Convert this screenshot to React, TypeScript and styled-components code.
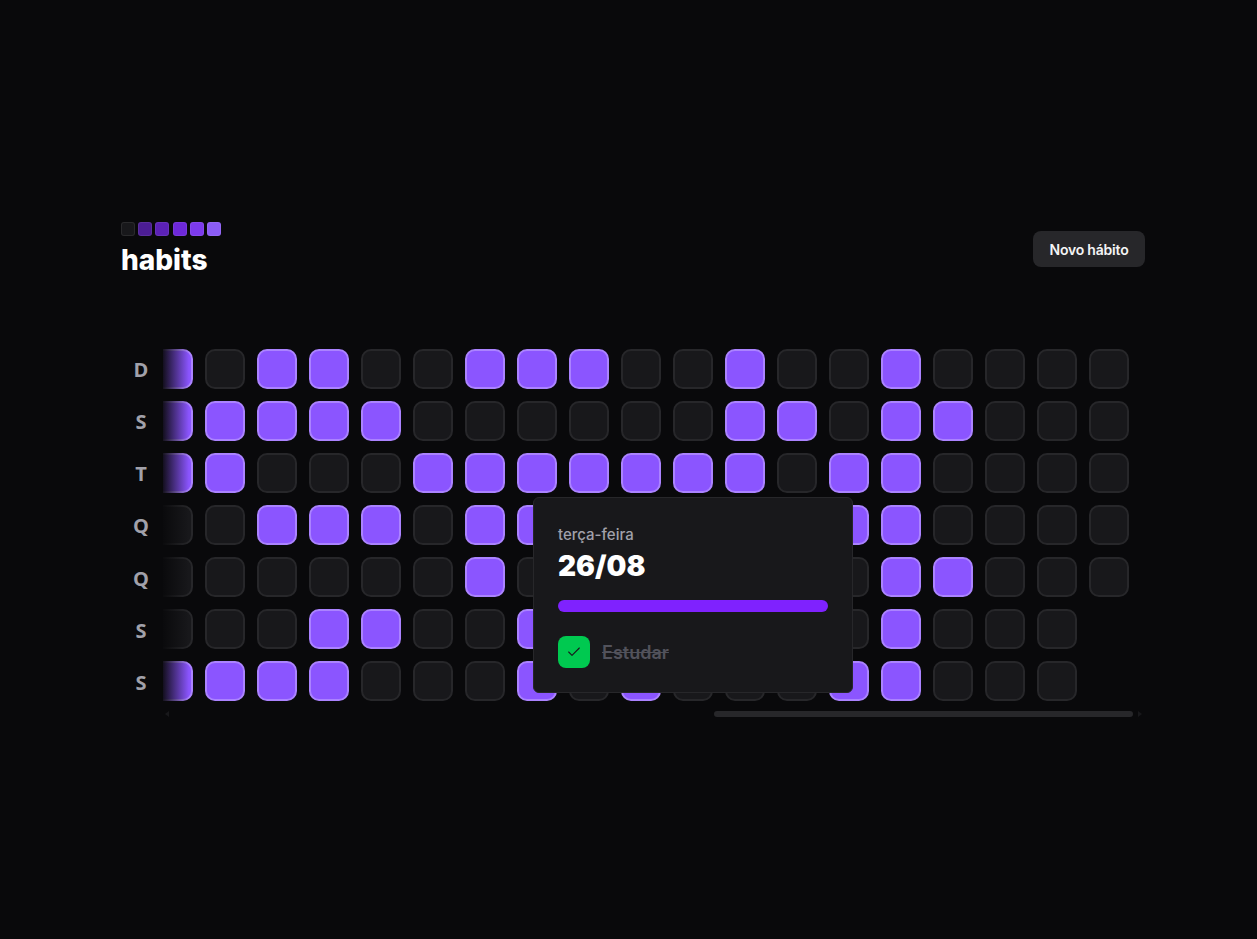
import React from 'react';
import styled, {createGlobalStyle} from "styled-components";
import {Check} from "lucide-react";

const GlobalStyle = createGlobalStyle`
  * {
    box-sizing: border-box;
    margin: 0;
    padding: 0;
  }

  body {
    background-color: #09090b;
    color: #ffffff;
    font-family: Inter, "Liberation Sans", sans-serif;
  }
`

const weekDays = ['D', 'S', 'T', 'Q', 'Q', 'S', 'S']
const logoColors = ['#18181b', '#4c1d95', '#5b21b6', '#6d28d9', '#7c3aed', '#8b5cf6']

// one string per week day, one char per week. "-" is a day still to come
const history = [
    '1011001110010010000',
    '1111100000011011000',
    '1100011111110110000',
    '0011101100000110000',
    '0000001000000011000',
    '000110010000001000-',
    '111100010100011000-',
]

export default function App() {
    return (
        <Page>
            <GlobalStyle/>
            <Container>
                <Header>
                    <div>
                        <Logo>
                            {logoColors.map(color => <LogoSquare key={color} $color={color}/>)}
                        </Logo>
                        <Title>habits</Title>
                    </div>
                    <NewHabitButton>Novo hábito</NewHabitButton>
                </Header>

                <Board>
                    <WeekDays>
                        {weekDays.map((day, index) => <WeekDay key={index}>{day}</WeekDay>)}
                    </WeekDays>
                    <ScrollArea>
                        <Days>
                            {history.map((row, rowIndex) => (
                                row.split('').map((day, weekIndex) => (
                                    day === '-'
                                        ? <span key={`${rowIndex}-${weekIndex}`}/>
                                        : <Day key={`${rowIndex}-${weekIndex}`} $done={day === '1'}/>
                                ))
                            ))}
                        </Days>
                        <Fade/>
                        <ScrollBar>
                            <ArrowLeft/>
                            <ScrollTrack>
                                <ScrollThumb/>
                            </ScrollTrack>
                            <ArrowRight/>
                        </ScrollBar>
                    </ScrollArea>

                    <Popover>
                        <PopoverDay>terça-feira</PopoverDay>
                        <PopoverDate>26/08</PopoverDate>
                        <Progress/>
                        <HabitRow>
                            <HabitCheck>
                                <Check size={16} strokeWidth={1.6} color="#18181b"/>
                            </HabitCheck>
                            <HabitName>Estudar</HabitName>
                        </HabitRow>
                    </Popover>
                </Board>
            </Container>
        </Page>
    );
};

const Page = styled.div`
  min-height: 100vh;
  display: flex;
  align-items: center;
  padding-left: 121px;
`

const Container = styled.div`
  width: 1024px;
`

const Header = styled.header`
  display: flex;
  align-items: center;
  justify-content: space-between;
`

const Logo = styled.div`
  display: flex;
  gap: 3.2px;
  margin-bottom: 8px;
`

const LogoSquare = styled.span<{ $color: string }>`
  width: 14px;
  height: 14px;
  border-radius: 3px;
  border: 1px solid rgba(255, 255, 255, 0.08);
  background-color: ${props => props.$color};
`

const Title = styled.h1`
  font-size: 28px;
  line-height: 32px;
  font-weight: 800;
`

const NewHabitButton = styled.button`
  width: 112px;
  height: 36px;
  border: none;
  border-radius: 8px;
  background-color: #27272a;
  color: #f4f4f5;
  font-family: inherit;
  font-size: 14px;
  font-weight: 600;
  letter-spacing: -0.2px;
`

const Board = styled.section`
  position: relative;
  display: flex;
  margin-top: 73px;
`

const WeekDays = styled.div`
  width: 42px;
  flex-shrink: 0;
  display: grid;
  grid-template-rows: repeat(7, 40px);
  gap: 12.33px;
  align-content: start;
`

const WeekDay = styled.span`
  padding-right: 2px;
  display: flex;
  align-items: center;
  justify-content: center;
  color: #a1a1aa;
  font-size: 20px;
  font-weight: 700;
  font-family: "Open Sans", sans-serif;
`

const ScrollArea = styled.div`
  position: relative;
  width: 982px;
  overflow: hidden;
`

const Days = styled.div`
  display: grid;
  grid-template-rows: repeat(7, 40px);
  grid-template-columns: repeat(19, 40px);
  gap: 12px;
  justify-content: end;
  padding-right: 16px;
`

const Day = styled.div<{ $done: boolean }>`
  width: 40px;
  height: 40px;
  border-radius: 10px;
  border: 2px solid ${props => props.$done ? '#ab83ff' : '#27272a'};
  background-color: ${props => props.$done ? '#8b55ff' : '#18181b'};
`

const Fade = styled.div`
  position: absolute;
  top: 0;
  left: 0;
  width: 26px;
  height: 352px;
  background: linear-gradient(to right, rgba(9, 9, 11, 0.92), rgba(9, 9, 11, 0));
`

const ScrollBar = styled.div`
  margin-top: 10px;
  height: 6px;
  display: flex;
  align-items: center;
  gap: 2px;
`

const ScrollTrack = styled.div`
  flex: 1;
  height: 6px;
  display: flex;
  justify-content: flex-end;
`

const ScrollThumb = styled.div`
  width: 419px;
  height: 6px;
  border-radius: 3px;
  background-color: #27272a;
`

const ArrowLeft = styled.span`
  margin-left: 2px;
  width: 0;
  height: 0;
  border-top: 3px solid transparent;
  border-bottom: 3px solid transparent;
  border-right: 4px solid #18181b;
`

const ArrowRight = styled.span`
  margin: 0 3px 0 3px;
  width: 0;
  height: 0;
  border-top: 3px solid transparent;
  border-bottom: 3px solid transparent;
  border-left: 4px solid #18181b;
`

const Popover = styled.div`
  position: absolute;
  top: 148px;
  left: 412px;
  width: 320px;
  height: 196px;
  padding: 24px;
  border: 1px solid #27272a;
  border-radius: 6px;
  background-color: #18181b;
`

const PopoverDay = styled.div`
  color: #a1a1aa;
  font-size: 15px;
  line-height: 26px;
  font-weight: 500;
`

const PopoverDate = styled.div`
  font-size: 28px;
  line-height: 36px;
  font-weight: 900;
`

const Progress = styled.div`
  height: 12px;
  margin-top: 16px;
  border-radius: 6px;
  background-color: #7f22fe;
`

const HabitRow = styled.div`
  display: flex;
  align-items: center;
  gap: 12px;
  margin-top: 24px;
`

const HabitCheck = styled.div`
  width: 32px;
  height: 32px;
  border-radius: 8px;
  display: flex;
  align-items: center;
  justify-content: center;
  background-color: #00c950;
`

const HabitName = styled.span`
  padding-top: 2px;
  color: #52525b;
  font-size: 18px;
  line-height: 30px;
  font-weight: 600;
  text-decoration: line-through;
`
